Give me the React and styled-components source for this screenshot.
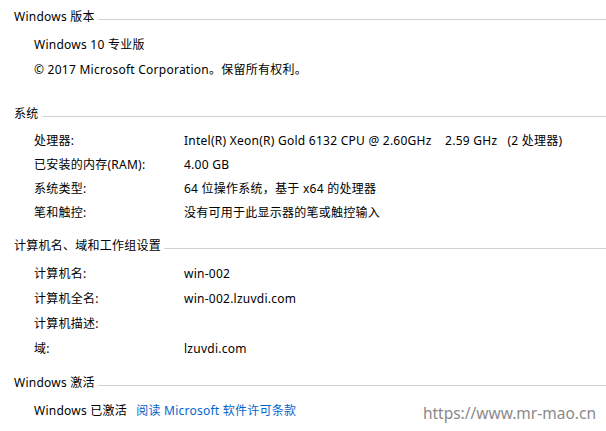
import React from "react";
import styled, { createGlobalStyle } from "styled-components";

const GlobalStyle = createGlobalStyle`
  html, body {
    margin: 0;
    padding: 0;
    background: #fff;
  }
  body {
    font-family: "Noto Sans", "Noto Sans CJK SC", sans-serif;
    font-size: 12px;
    letter-spacing: 0.25px;
    line-height: 1;
    color: #000;
  }
`;

const Page = styled.div`
  position: relative;
  width: 606px;
  height: 431px;
  overflow: hidden;
  box-sizing: border-box;
  padding: 5px 0 0 14px;
`;

const Section = styled.section`
  margin-bottom: ${(p) => p.$gap}px;
`;

const Heading = styled.div`
  display: flex;
  align-items: center;
  height: 24px;
  white-space: nowrap;
`;

const HeadingLine = styled.div`
  flex: 1;
  height: 1px;
  margin: 5px 0 0 3px;
  background: #d2d2d2;
`;

const Rows = styled.div`
  padding: 3px 0 0 20px;
`;

const Row = styled.div`
  display: flex;
  align-items: center;
  height: ${(p) => p.$h}px;
  white-space: nowrap;
`;

const Label = styled.span`
  width: 150px;
  flex-shrink: 0;
`;

const Value = styled.span`
  white-space: pre;
`;

const Link = styled.a`
  color: #0066cc;
  text-decoration: none;
  margin-left: 9px;
  cursor: pointer;
`;

const Watermark = styled.div`
  position: absolute;
  right: 10px;
  bottom: 10px;
  font-family: "Noto Sans", "Open Sans", sans-serif;
  font-size: 15.5px;
  letter-spacing: 0;
  color: #8a8a8a;
`;

const sections = [
  {
    title: "Windows 版本",
    gap: 20,
    h: 25,
    rows: [["Windows 10 专业版"], ["© 2017 Microsoft Corporation。保留所有权利。"]],
  },
  {
    title: "系统",
    gap: 9,
    h: 24,
    rows: [
      ["处理器:", "Intel(R) Xeon(R) Gold 6132 CPU @ 2.60GHz    2.59 GHz   (2 处理器)"],
      ["已安装的内存(RAM):", "4.00 GB"],
      ["系统类型:", "64 位操作系统，基于 x64 的处理器"],
      ["笔和触控:", "没有可用于此显示器的笔或触控输入"],
    ],
  },
  {
    title: "计算机名、域和工作组设置",
    gap: 10,
    h: 25,
    rows: [
      ["计算机名:", "win-002"],
      ["计算机全名:", "win-002.lzuvdi.com"],
      ["计算机描述:", ""],
      ["域:", "lzuvdi.com"],
    ],
  },
];

export default function App() {
  return (
    <>
      <GlobalStyle />
      <Page>
        {sections.map((s) => (
          <Section key={s.title} $gap={s.gap}>
            <Heading>
              {s.title}
              <HeadingLine />
            </Heading>
            <Rows>
              {s.rows.map((r, i) => (
                <Row key={i} $h={s.h}>
                  {r.length === 1 ? (
                    <Value>{r[0]}</Value>
                  ) : (
                    <>
                      <Label>{r[0]}</Label>
                      <Value>{r[1]}</Value>
                    </>
                  )}
                </Row>
              ))}
            </Rows>
          </Section>
        ))}
        <Section $gap={0}>
          <Heading>
            Windows 激活
            <HeadingLine />
          </Heading>
          <Rows>
            <Row $h={25}>
              <Value>Windows 已激活</Value>
              <Link>阅读 Microsoft 软件许可条款</Link>
            </Row>
          </Rows>
        </Section>
        <Watermark>https://www.mr-mao.cn</Watermark>
      </Page>
    </>
  );
}
